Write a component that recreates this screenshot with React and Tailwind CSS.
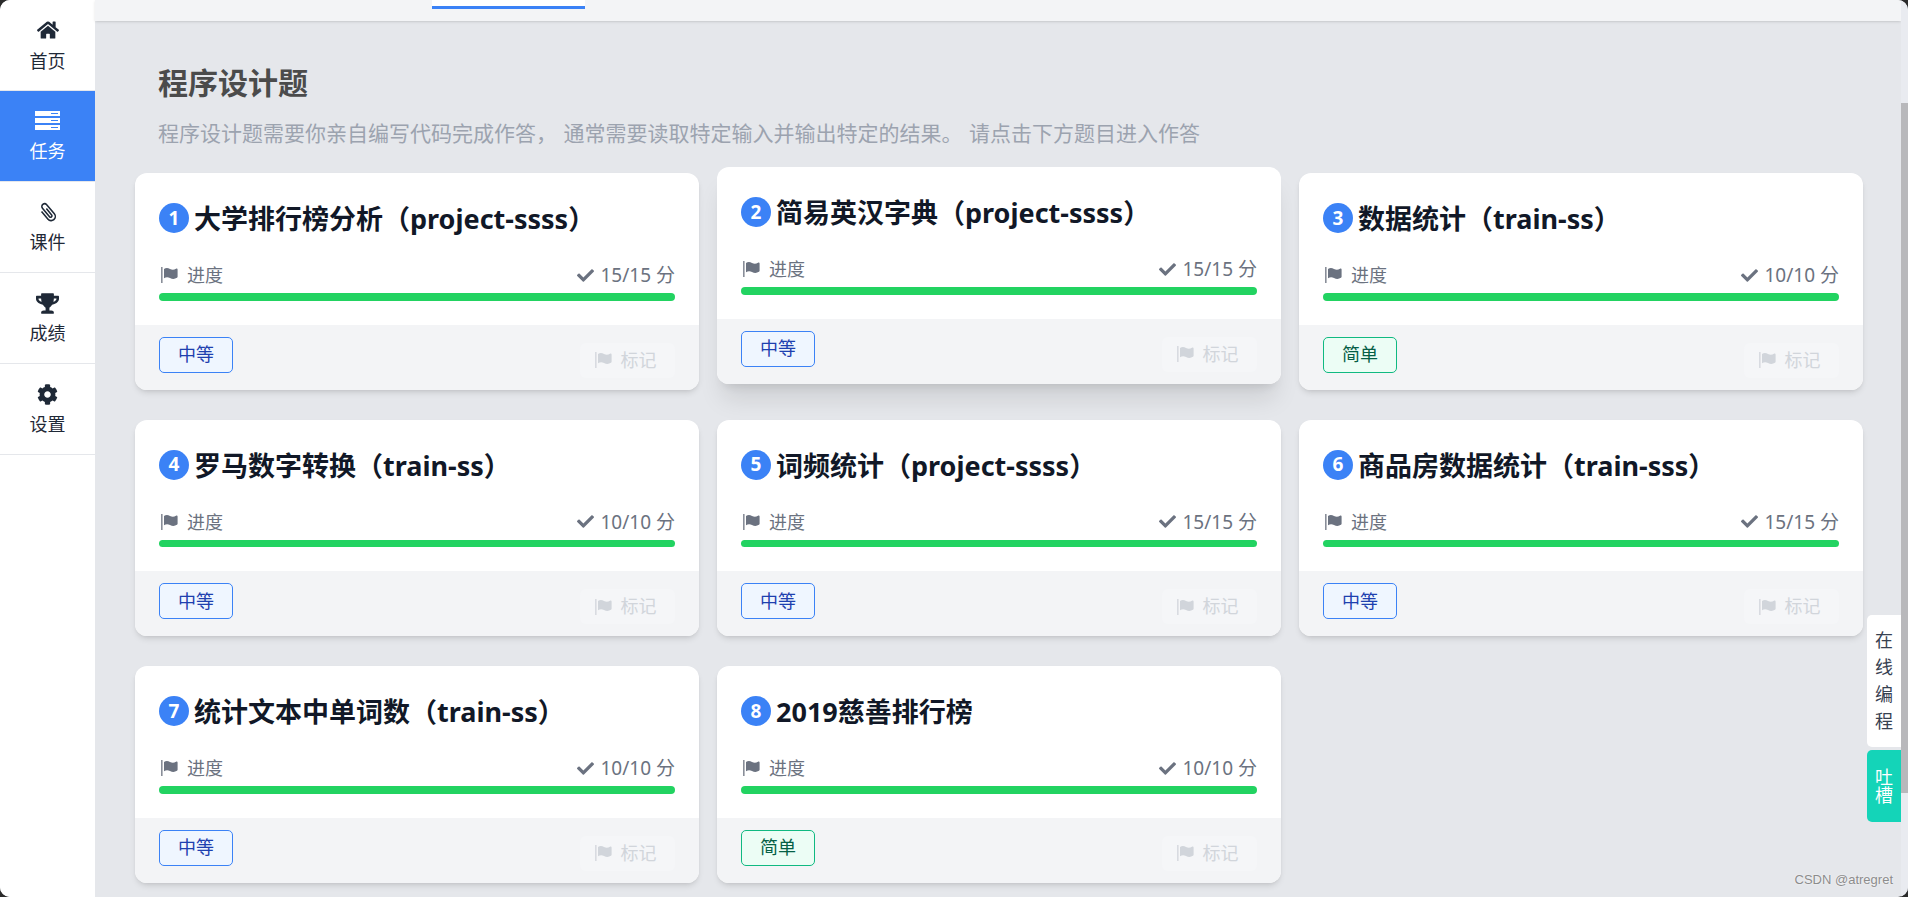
import React from "react";
import { FaHome, FaTrophy, FaCog, FaCheck } from "react-icons/fa";

const navItems = [
  { label: "首页", icon: <FaHome size={22} /> },
  { label: "任务", icon: <ServerIcon />, active: true },
  { label: "课件", icon: <ClipIcon /> },
  { label: "成绩", icon: <FaTrophy size={23} /> },
  { label: "设置", icon: <FaCog size={21} /> },
];

const problems = [
  { id: 1, title: "大学排行榜分析（project-ssss）", score: "15/15", level: "中等" },
  { id: 2, title: "简易英汉字典（project-ssss）", score: "15/15", level: "中等", hover: true },
  { id: 3, title: "数据统计（train-ss）", score: "10/10", level: "简单" },
  { id: 4, title: "罗马数字转换（train-ss）", score: "10/10", level: "中等" },
  { id: 5, title: "词频统计（project-ssss）", score: "15/15", level: "中等" },
  { id: 6, title: "商品房数据统计（train-sss）", score: "15/15", level: "中等" },
  { id: 7, title: "统计文本中单词数（train-ss）", score: "10/10", level: "中等" },
  { id: 8, title: "2019慈善排行榜", score: "10/10", level: "简单" },
];

function ServerIcon() {
  return (
    <svg width="25" height="20" viewBox="0 0 25 20" fill="currentColor" fillRule="evenodd">
      <path d="M0 0h25v5H0zM16 2v1h7V2z" />
      <path d="M0 7h25v5H0zM16 9v1h7V9z" />
      <path d="M0 14h25v5H0zM16 16v1h7v-1z" />
    </svg>
  );
}

function ClipIcon() {
  return (
    <svg width="22" height="22" viewBox="-2 0 24 24" fill="none" stroke="currentColor" strokeWidth="1.7">
      <path
        transform="rotate(-40 10 12)"
        d="M11 8V17A1.500 1.500 0 0 1 8 17V5A3 3 0 0 1 14 5V18A4.500 4.500 0 0 1 5 18V7"
      />
    </svg>
  );
}

function FlagIcon({ className }) {
  return (
    <svg className={className} width="18" height="16" viewBox="0 0 18 16" fill="currentColor">
      <rect x="0" y="0" width="1.6" height="16" opacity="0.8" />
      <path d="M3 2c2-1.400 4-1.200 6 0 2.200 1.200 4 1 6-.2.800-.4 1.600-.2 1.600.8v7.200c0 .5-.2.800-.6 1-2.400 1.400-4.600 1.400-7 .2-2-1-4-1-6 .2z" />
    </svg>
  );
}

function Sidebar() {
  return (
    <div className="w-[95px] shrink-0 bg-white">
      {navItems.map((item, idx) => (
        <div
          key={item.label}
          className={
            "flex h-[91px] flex-col items-center border-b border-[#e5e7eb] pt-[19px] " +
            (item.active ? "bg-[#3b82f6] text-white" : "text-[#1f2937]")
          }
        >
          <div className="flex h-[22px] items-center justify-center">{item.icon}</div>
          <div className={(idx === 0 ? "mt-[7px]" : "mt-[6px]") + " text-[18px] leading-[27px]"}>{item.label}</div>
        </div>
      ))}
    </div>
  );
}

function ProblemCard({ p }) {
  return (
    <div
      className={
        "h-[216.5px] overflow-hidden rounded-xl bg-white " +
        (p.hover ? "-translate-y-[6px] shadow-xl" : "shadow-md")
      }
    >
      <div className="h-[151.5px] px-6 pt-[30px]">
        <div className="flex h-[30px] items-center">
          <span className="flex h-[30px] w-[30px] shrink-0 items-center justify-center rounded-full bg-[#3b82f6] text-[19px] font-bold text-white">
            {p.id}
          </span>
          <span className="ml-[5px] whitespace-nowrap pt-[3px] text-[27px] font-bold text-[#111827]">{p.title}</span>
        </div>
        <div className="mt-[30px] flex h-6 items-center justify-between text-[18px] leading-6 text-[#6b7280]">
          <div className="flex items-center">
            <FlagIcon className="ml-[2px] text-[#6b7280]" />
            <span className="ml-[8px]">进度</span>
          </div>
          <div className="flex items-center">
            <FaCheck size={17} />
            <span className="ml-[7px] text-[19px]">{p.score} 分</span>
          </div>
        </div>
        <div className="mt-[6px] h-[7.5px] rounded-full bg-[#22d361]" />
      </div>
      <div className="flex h-[65px] items-start justify-between bg-[#f3f4f6] px-6 pt-3">
        <span
          className={
            "flex h-9 w-[74px] items-center justify-center rounded-[5px] border text-[18px] " +
            (p.level === "简单"
              ? "border-[#10b981] bg-[#ecfdf5] text-[#065f46]"
              : "border-[#3b82f6] bg-[#eff6ff] text-[#1e40af]")
          }
        >
          {p.level}
        </span>
        <span className="mt-[6px] flex h-[35px] w-[95px] items-center justify-center rounded-md bg-[#f5f6f8] pr-[4px] text-[18px] text-[#d1d5db]">
          <FlagIcon />
          <span className="ml-[8px]">标记</span>
        </span>
      </div>
    </div>
  );
}

export default function App() {
  return (
    <div className="h-[897px] w-full overflow-hidden bg-[#2b2b2b] font-['Noto_Sans','Noto_Sans_CJK_SC',sans-serif]">
      <div className="relative flex h-full overflow-hidden rounded-[10px] bg-[#e5e7eb]">
        <Sidebar />

        <div className="min-w-0 flex-1">
          <div className="h-[21px] bg-[#f3f4f6] shadow">
            <div className="ml-[337px] h-[9px] w-[153px] border-b-[3px] border-[#3b82f6] bg-white" />
          </div>

          <div className="mt-[42px] pl-[63px]">
            <h1 className="text-[30px] font-bold leading-[40px] text-[#4b4b4b]">程序设计题</h1>
            <p className="mt-[15px] h-[31px] text-[21px] leading-[30px] text-[#9ca3af] [word-spacing:1px]">
              程序设计题需要你亲自编写代码完成作答， 通常需要读取特定输入并输出特定的结果。 请点击下方题目进入作答
            </p>
          </div>

          <div className="mt-6 grid grid-cols-[repeat(3,564px)] gap-x-[18px] gap-y-[30px] pl-10">
            {problems.map((p) => (
              <ProblemCard key={p.id} p={p} />
            ))}
          </div>
        </div>

        <div className="flex w-[7px] shrink-0 flex-col bg-[#e9ebf0]">
          <div className="mt-[103px] h-[690px] bg-[#b8b8bb]" />
        </div>

        <div className="absolute right-[7px] top-[615px] w-[34px]">
          <div className="flex h-[132px] flex-col items-center justify-center rounded-l-[5px] bg-white text-[18px] leading-[27px] text-[#374151]">
            <span>在</span>
            <span>线</span>
            <span>编</span>
            <span>程</span>
          </div>
          <div className="mt-[3px] flex h-[72px] flex-col items-center justify-center rounded-l-[5px] bg-[#14d4b8] text-[18px] leading-[18px] text-white">
            <span>吐</span>
            <span>槽</span>
          </div>
        </div>

        <div className="absolute right-[15px] top-[872px] font-['Liberation_Sans',sans-serif] text-[13px] leading-4 text-[#8c8c8c] [text-shadow:0_0_2px_#fff]">
          CSDN @atregret
        </div>
      </div>
    </div>
  );
}
